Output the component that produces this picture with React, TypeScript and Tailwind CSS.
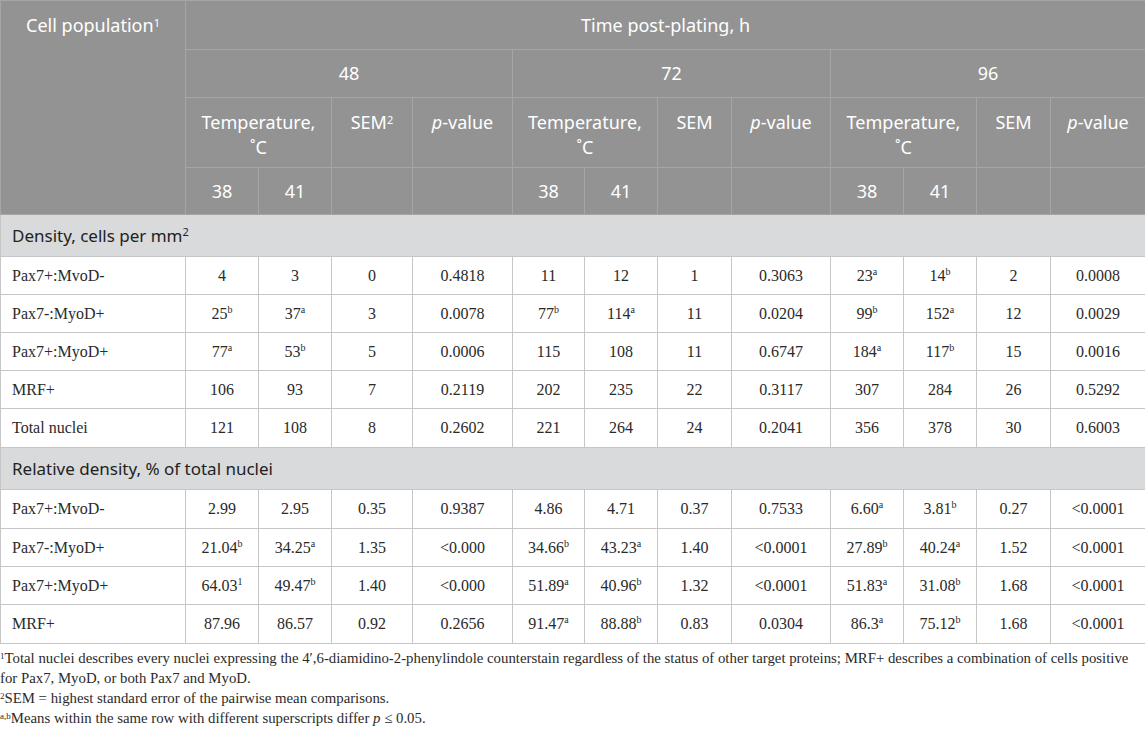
const colW = [
  'w-[185px]', 'w-[73px]', 'w-[73px]', 'w-[81px]', 'w-[100px]',
  'w-[72px]', 'w-[73px]', 'w-[74px]', 'w-[99px]',
  'w-[73px]', 'w-[73px]', 'w-[74px]', 'w-[95px]',
]

const density = [
  ['Pax7+:MvoD-', '4', '3', '0', '0.4818', '11', '12', '1', '0.3063', '23^a', '14^b', '2', '0.0008'],
  ['Pax7-:MyoD+', '25^b', '37^a', '3', '0.0078', '77^b', '114^a', '11', '0.0204', '99^b', '152^a', '12', '0.0029'],
  ['Pax7+:MyoD+', '77^a', '53^b', '5', '0.0006', '115', '108', '11', '0.6747', '184^a', '117^b', '15', '0.0016'],
  ['MRF+', '106', '93', '7', '0.2119', '202', '235', '22', '0.3117', '307', '284', '26', '0.5292'],
  ['Total nuclei', '121', '108', '8', '0.2602', '221', '264', '24', '0.2041', '356', '378', '30', '0.6003'],
]

const relative = [
  ['Pax7+:MvoD-', '2.99', '2.95', '0.35', '0.9387', '4.86', '4.71', '0.37', '0.7533', '6.60^a', '3.81^b', '0.27', '<0.0001'],
  ['Pax7-:MyoD+', '21.04^b', '34.25^a', '1.35', '<0.000', '34.66^b', '43.23^a', '1.40', '<0.0001', '27.89^b', '40.24^a', '1.52', '<0.0001'],
  ['Pax7+:MyoD+', '64.03^1', '49.47^b', '1.40', '<0.000', '51.89^a', '40.96^b', '1.32', '<0.0001', '51.83^a', '31.08^b', '1.68', '<0.0001'],
  ['MRF+', '87.96', '86.57', '0.92', '0.2656', '91.47^a', '88.88^b', '0.83', '0.0304', '86.3^a', '75.12^b', '1.68', '<0.0001'],
]

function Val({ v }: { v: string }) {
  const [main, sup] = v.split('^')
  return (
    <>
      {main}
      {sup && <sup className="text-[10px] -top-[0.6em]">{sup}</sup>}
    </>
  )
}

const th = 'border border-[#a6a6a6] text-white font-normal text-[18px] leading-[25px] text-center'
const td = 'border border-[#c6c6c6] text-center text-[16px] text-[#2a2a2a]'

function Section({ title, rows, heights }: { title: React.ReactNode; rows: string[][]; heights: string[] }) {
  return (
    <>
      <tr className="h-[42px] bg-[#d9dadb]">
        <td colSpan={13} className="border border-[#c6c6c6] px-[11px] text-left text-[17px] text-[#222] font-['Noto_Sans',sans-serif]">
          {title}
        </td>
      </tr>
      {rows.map((r, i) => (
        <tr key={i} className={heights[i]}>
          {r.map((c, j) =>
            j === 0 ? (
              <td key={j} className={`${td} text-left px-[11px]`}>{c}</td>
            ) : (
              <td key={j} className={td}><Val v={c} /></td>
            )
          )}
        </tr>
      ))}
    </>
  )
}

function Temp() {
  return (
    <td colSpan={2} className={`${th} align-top pt-[12px]`}>
      Temperature,
      <br />
      ˚C
    </td>
  )
}

function PVal() {
  return (
    <td className={`${th} align-top pt-[12px]`}>
      <i>p</i>-value
    </td>
  )
}

export default function App() {
  return (
    <div className="w-[1145px] h-[730px] bg-white overflow-hidden font-['Liberation_Serif',serif]">
      <table className="table-fixed border-collapse w-[1145px]">
        <colgroup>
          {colW.map((w, i) => (
            <col key={i} className={w} />
          ))}
        </colgroup>
        <thead className="bg-[#939393] font-['Noto_Sans',sans-serif]">
          <tr className="h-[49px]">
            <td rowSpan={4} className={`${th} align-top pt-[12px]`}>
              Cell population<sup className="text-[11px]">1</sup>
            </td>
            <td colSpan={12} className={th}>Time post-plating, h</td>
          </tr>
          <tr className="h-[48px]">
            <td colSpan={4} className={th}>48</td>
            <td colSpan={4} className={th}>72</td>
            <td colSpan={4} className={th}>96</td>
          </tr>
          <tr className="h-[70px]">
            <Temp />
            <td className={`${th} align-top pt-[12px]`}>
              SEM<sup className="text-[11px]">2</sup>
            </td>
            <PVal />
            <Temp />
            <td className={`${th} align-top pt-[12px]`}>SEM</td>
            <PVal />
            <Temp />
            <td className={`${th} align-top pt-[12px]`}>SEM</td>
            <PVal />
          </tr>
          <tr className="h-[47px]">
            {[0, 1, 2].map((g) => (
              <>
                <td key={`a${g}`} className={th}>38</td>
                <td key={`b${g}`} className={th}>41</td>
                <td key={`c${g}`} className={th}></td>
                <td key={`d${g}`} className={th}></td>
              </>
            ))}
          </tr>
        </thead>
        <tbody>
          <Section
            title={<>Density, cells per mm<sup className="text-[11px]">2</sup></>}
            rows={density}
            heights={['h-[38px]', 'h-[38px]', 'h-[38px]', 'h-[38px]', 'h-[39px]']}
          />
          <Section
            title="Relative density, % of total nuclei"
            rows={relative}
            heights={['h-[39px]', 'h-[38px]', 'h-[38px]', 'h-[39px]']}
          />
        </tbody>
      </table>
      <div className="pt-[4px] text-[14.8px] leading-[20px] text-[#2a2a2a] whitespace-nowrap">
        <p>
          <sup className="text-[9px]">1</sup>Total nuclei describes every nuclei expressing the 4′,6-diamidino-2-phenylindole counterstain regardless of the status of other target proteins; MRF+ describes a combination of cells positive
        </p>
        <p>for Pax7, MyoD, or both Pax7 and MyoD.</p>
        <p>
          <sup className="text-[9px]">2</sup>SEM = highest standard error of the pairwise mean comparisons.
        </p>
        <p>
          <sup className="text-[9px]">a,b</sup>Means within the same row with different superscripts differ <i>p</i> ≤ 0.05.
        </p>
      </div>
    </div>
  )
}
